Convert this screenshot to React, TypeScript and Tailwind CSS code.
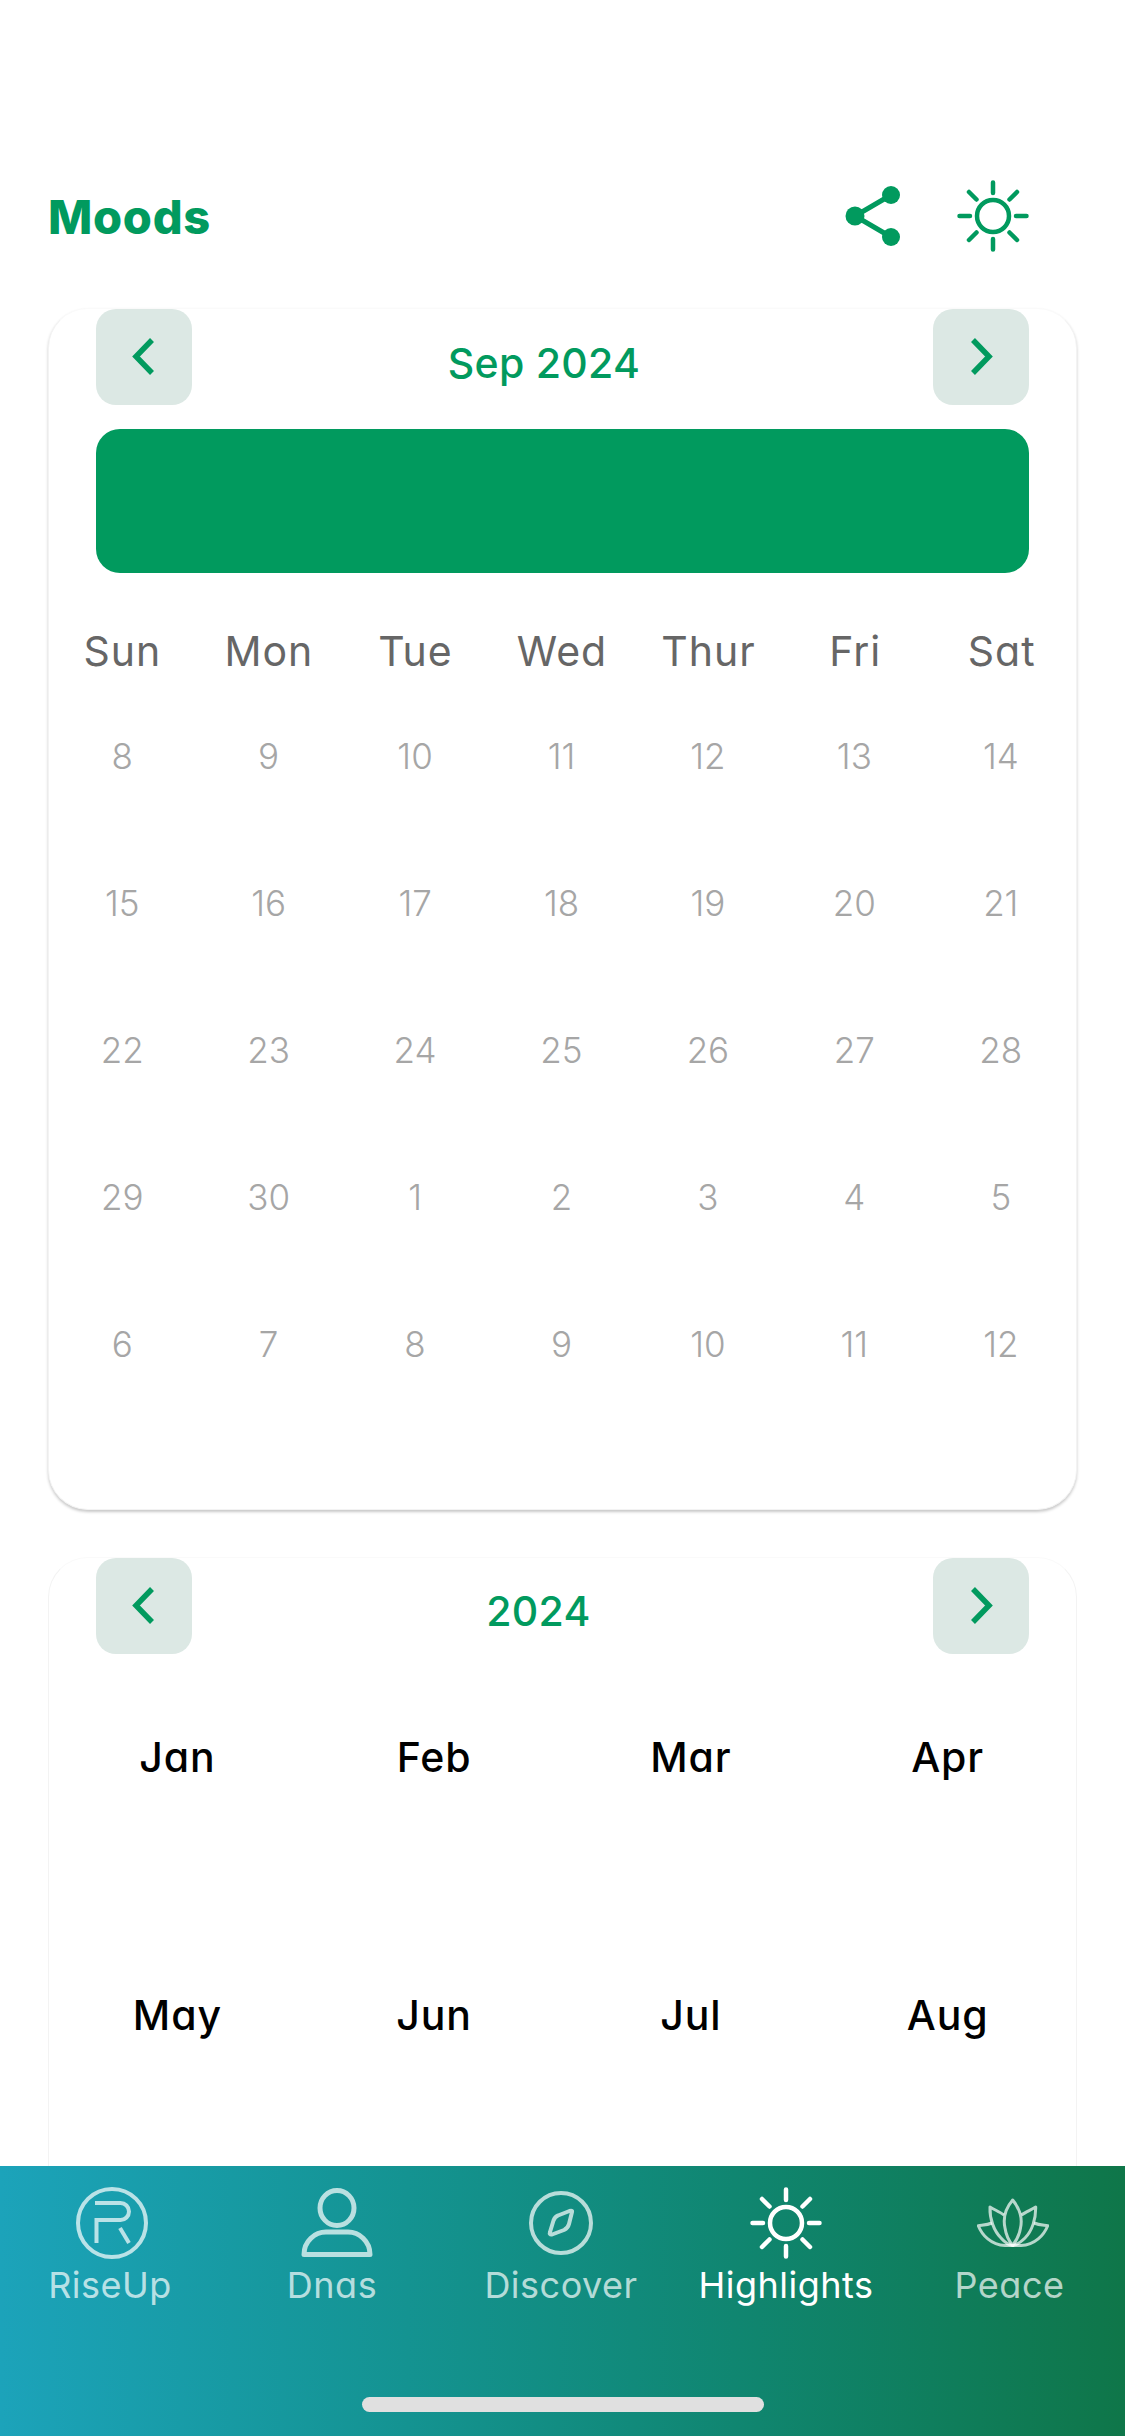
import { ReactNode } from 'react'

const weekDays = ['Sun', 'Mon', 'Tue', 'Wed', 'Thur', 'Fri', 'Sat']
const dates = [8, 9, 10, 11, 12, 13, 14, 15, 16, 17, 18, 19, 20, 21, 22, 23, 24, 25, 26, 27, 28, 29, 30, 1, 2, 3, 4, 5, 6, 7, 8, 9, 10, 11, 12]
const months = ['Jan', 'Feb', 'Mar', 'Apr', 'May', 'Jun', 'Jul', 'Aug']

const ShareIcon = () => (
  <svg width="60" height="60" viewBox="0 0 60 60" className="text-[#019a5e]">
    <path d="M48 9 L12 30 L48 51" fill="none" stroke="currentColor" strokeWidth="5" />
    <circle cx="12" cy="30" r="9.5" fill="currentColor" />
    <circle cx="48" cy="9" r="9" fill="currentColor" />
    <circle cx="48" cy="51" r="9" fill="currentColor" />
  </svg>
)

const SunIcon = ({ className, width = 4.5 }: { className: string; width?: number }) => (
  <svg width="72" height="72" viewBox="0 0 72 72" className={className} fill="none" stroke="currentColor" strokeWidth={width} strokeLinecap="round">
    <circle cx="36" cy="36" r="16" />
    <path d="M36 2.5V13M36 59V69.5M2.5 36H13M59 36H69.5M12 12L19.500 19.500M52.500 52.500L60 60M12 60L19.500 52.500M52.500 19.500L60 12" />
  </svg>
)

const RiseUpIcon = () => (
  <svg width="72" height="72" viewBox="0 0 72 72" fill="none" stroke="currentColor" strokeWidth="4" className="ml-[4px]">
    <circle cx="36" cy="36" r="34" />
    <path d="M19 16H44.500A8.500 8.500 0 0 1 44.500 33H20.500V56" />
    <path d="M44 41L53 56" />
  </svg>
)

const PersonIcon = () => (
  <svg width="72" height="70" viewBox="0 0 72 70" fill="none" stroke="currentColor" strokeWidth="5" className="ml-[10px]">
    <ellipse cx="36" cy="20" rx="17" ry="17.500" />
    <path d="M3 66.500C3 53 14 44 25 44H47C58 44 69 53 69 66.500Z" strokeLinejoin="round" />
  </svg>
)

const CompassIcon = () => (
  <svg width="72" height="72" viewBox="0 0 72 72" fill="none" stroke="currentColor" strokeWidth="4">
    <circle cx="36" cy="36" r="30" />
    <path d="M47 25L44 37Q43 41 39 43L27 47.500Q24 48 25 45L28.500 33.500Q30 29.500 33 28.500L44.500 24Q47.500 23 47 25Z" strokeLinejoin="round" />
  </svg>
)

const LotusIcon = () => (
  <svg width="72" height="50" viewBox="12 13 72 50" fill="none" stroke="currentColor" strokeWidth="3" strokeLinejoin="round" className="ml-[7px]">
    <path d="M47.700 15C40 24 38 34 40 43C41 50 44 56 47.700 60.500C51 56 54.500 50 55.500 43C57.500 34 55 24 47.700 15Z" />
    <path d="M39 30C35 27 30 25 25 22C24.500 34 29 46 36 53C39.500 57 44 60 47.700 60.500" />
    <path d="M56.500 30C60.500 27 66 25 70.700 22C71 34 67 46 60 53C56 57 51.500 60 47.700 60.500" />
    <path d="M27 38C22 40 18 40 13.300 40.700C17 50 26 60 40 60.500C43 60.700 45.500 60.500 47.700 60.500C50 60.500 53 60.700 56 60.500C70 60 79 50 82.700 40.700C78 40 74 40 69 38" />
  </svg>
)

const Chevron = ({ right }: { right?: boolean }) => (
  <svg width="24" height="40" viewBox="0 0 24 40" fill="none" stroke="#019a5e" strokeWidth="5.5">
    <path d={right ? 'M4 3L20 19.500L4 36' : 'M20 3L4 19.500L20 36'} />
  </svg>
)

const NavButton = ({ right }: { right?: boolean }) => (
  <div className="w-24 h-24 rounded-[20px] bg-[#dce8e4] flex items-center justify-center shrink-0">
    <Chevron right={right} />
  </div>
)

const NavItem = ({ icon, label, active }: { icon: ReactNode; label: string; active?: boolean }) => (
  <div className={`flex flex-col items-center ${active ? 'text-white' : 'text-white/70'}`}>
    <div className="h-[72px] flex items-center justify-center">{icon}</div>
    <span className="text-[36px] leading-[40px] mt-[6px] tracking-[0.5px] whitespace-nowrap">{label}</span>
  </div>
)

export default function App() {
  return (
    <div className="w-[1125px] h-[2436px] bg-white flex flex-col overflow-hidden font-['Inter','Liberation_Sans',sans-serif] [font-feature-settings:'cv11']">
      <div className="flex-1 min-h-0 overflow-hidden">
        <div className="h-[308px] pt-[180px] pl-[48px] pr-[96px] flex justify-between">
          <h1 className="text-[47px] leading-[74px] font-extrabold text-[#019a5e] tracking-[0.7px]">Moods</h1>
          <div className="flex items-center h-[72px] gap-[54px]">
            <ShareIcon />
            <SunIcon className="text-[#019a5e]" />
          </div>
        </div>

        <section className="mx-[48px] h-[1202px] rounded-[40px] border border-[#f3f3f3] border-t-[#fafafa] bg-white shadow-[0_2px_3px_rgba(0,0,0,0.22)]">
          <div className="flex items-start justify-between px-[47px]">
            <NavButton />
            <span className="mt-[29px] pr-[37px] text-[41px] leading-[50px] font-medium text-[#019a5e] tracking-[0.3px]">Sep 2024</span>
            <NavButton right />
          </div>
          <div className="mx-[47px] mt-[24px] h-[144px] rounded-[24px] bg-[#019a5e]" />
          <div className="grid grid-cols-7 mt-[48px] h-[60px] pr-[1px] items-center text-center text-[#666666] text-[41px] tracking-[1px]">
            {weekDays.map((d) => (
              <span key={d}>{d}</span>
            ))}
          </div>
          <div className="grid grid-cols-7 mt-[2px] pr-[2px] auto-rows-[147px] text-[#a6a6a6] text-[35px] font-light">
            {dates.map((d, i) => (
              <div key={i} className="flex items-center justify-center">{d}</div>
            ))}
          </div>
        </section>

        <section className="mx-[48px] mt-[47px] h-[800px] rounded-[40px] border border-[#f3f3f3] border-t-[#fafafa] bg-white">
          <div className="flex items-start justify-between px-[47px]">
            <NavButton />
            <span className="mt-[28px] pr-[48px] text-[41px] leading-[50px] font-medium text-[#019a5e] tracking-[0.3px]">2024</span>
            <NavButton right />
          </div>
          <div className="grid grid-cols-4 auto-rows-[258px] mt-[-25px] text-black text-[41px] font-medium tracking-[0.9px]">
            {months.map((m) => (
              <div key={m} className="flex items-center justify-center">{m}</div>
            ))}
          </div>
        </section>
      </div>

      <nav className="h-[270px] shrink-0 bg-linear-to-r from-[#1ca3ba] to-[#0f7649] flex flex-col pt-[21px]">
        <div className="grid grid-cols-[220px_224px_234px_216px_231px]">
          <NavItem icon={<RiseUpIcon />} label="RiseUp" />
          <NavItem icon={<PersonIcon />} label="Dnas" />
          <NavItem icon={<CompassIcon />} label="Discover" />
          <NavItem icon={<SunIcon className="text-white" />} label="Highlights" active />
          <NavItem icon={<LotusIcon />} label="Peace" />
        </div>
        <div className="w-[402px] h-[15px] rounded-full bg-[#e0e0e0] mt-[92px] ml-[362px]" />
      </nav>
    </div>
  )
}
